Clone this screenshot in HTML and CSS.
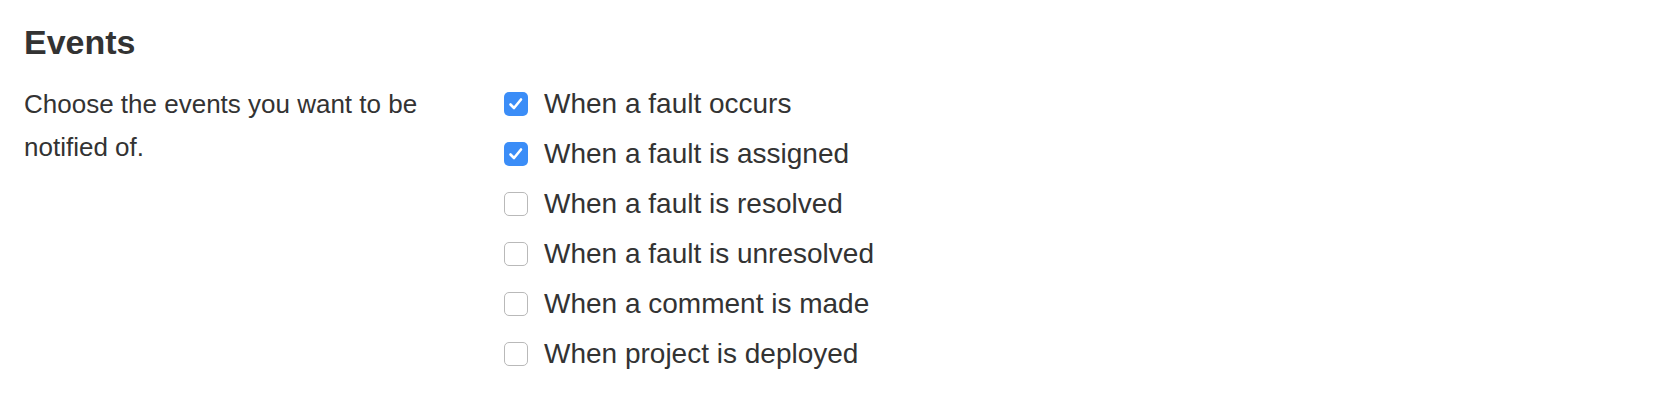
FILE: index.html
```html
<!DOCTYPE html>
<html lang="en">

<head>
    <meta charset="UTF-8">
    <meta name="viewport" content="width=device-width, initial-scale=1.0">
    <title>Events</title>
    <link rel="stylesheet" href="styles.css">
</head>

<body>
    <div class="settings">
        <h2>Events</h2>

        <div class="settings-row">
            <p class="help">Choose the events you want to be notified of.</p>

            <!-- Danh sách sự kiện -->
            <div class="options">
                <label class="option">
                    <span class="box checked">
                        <svg width="24" height="24" viewBox="0 0 24 24"><path d="M6.5 12.5 L10 16 L17 7.5" fill="none" stroke="#fff" stroke-width="2.6" stroke-linecap="round" stroke-linejoin="round"/></svg>
                    </span>
                    When a fault occurs
                </label>
                <label class="option">
                    <span class="box checked">
                        <svg width="24" height="24" viewBox="0 0 24 24"><path d="M6.5 12.5 L10 16 L17 7.5" fill="none" stroke="#fff" stroke-width="2.6" stroke-linecap="round" stroke-linejoin="round"/></svg>
                    </span>
                    When a fault is assigned
                </label>
                <label class="option"><span class="box"></span>When a fault is resolved</label>
                <label class="option"><span class="box"></span>When a fault is unresolved</label>
                <label class="option"><span class="box"></span>When a comment is made</label>
                <label class="option"><span class="box"></span>When project is deployed</label>
            </div>
        </div>
    </div>
</body>

</html>
```

FILE: styles.css
```css
/* Giao diện chung */
body {
    font-family: "Liberation Sans", Arial, sans-serif;
    color: #333;
    background-color: #fff;
    margin: 0;
    padding: 0;
}

.settings {
    padding: 25px 24px;
}

h2 {
    margin: 0 0 19px;
    font-size: 34px;
    line-height: 35px;
    font-weight: bold;
}

/* Hai cột: mô tả + danh sách */
.settings-row {
    display: grid;
    grid-template-columns: 480px 1fr;
}

.help {
    margin: 4px 0 0;
    max-width: 440px;
    font-size: 26px;
    line-height: 43px;
}

.options {
    display: flex;
    flex-direction: column;
}

.option {
    display: flex;
    align-items: center;
    gap: 16px;
    height: 50px;
    font-size: 28px;
    line-height: 50px;
}

/* Checkbox */
.box {
    box-sizing: border-box;
    width: 24px;
    height: 24px;
    border: 1px solid #b9b9b9;
    border-radius: 5px;
    background-color: #fff;
    flex-shrink: 0;
    display: flex;
}

.box.checked {
    border: none;
    background-color: #3b8df7;
}
```
